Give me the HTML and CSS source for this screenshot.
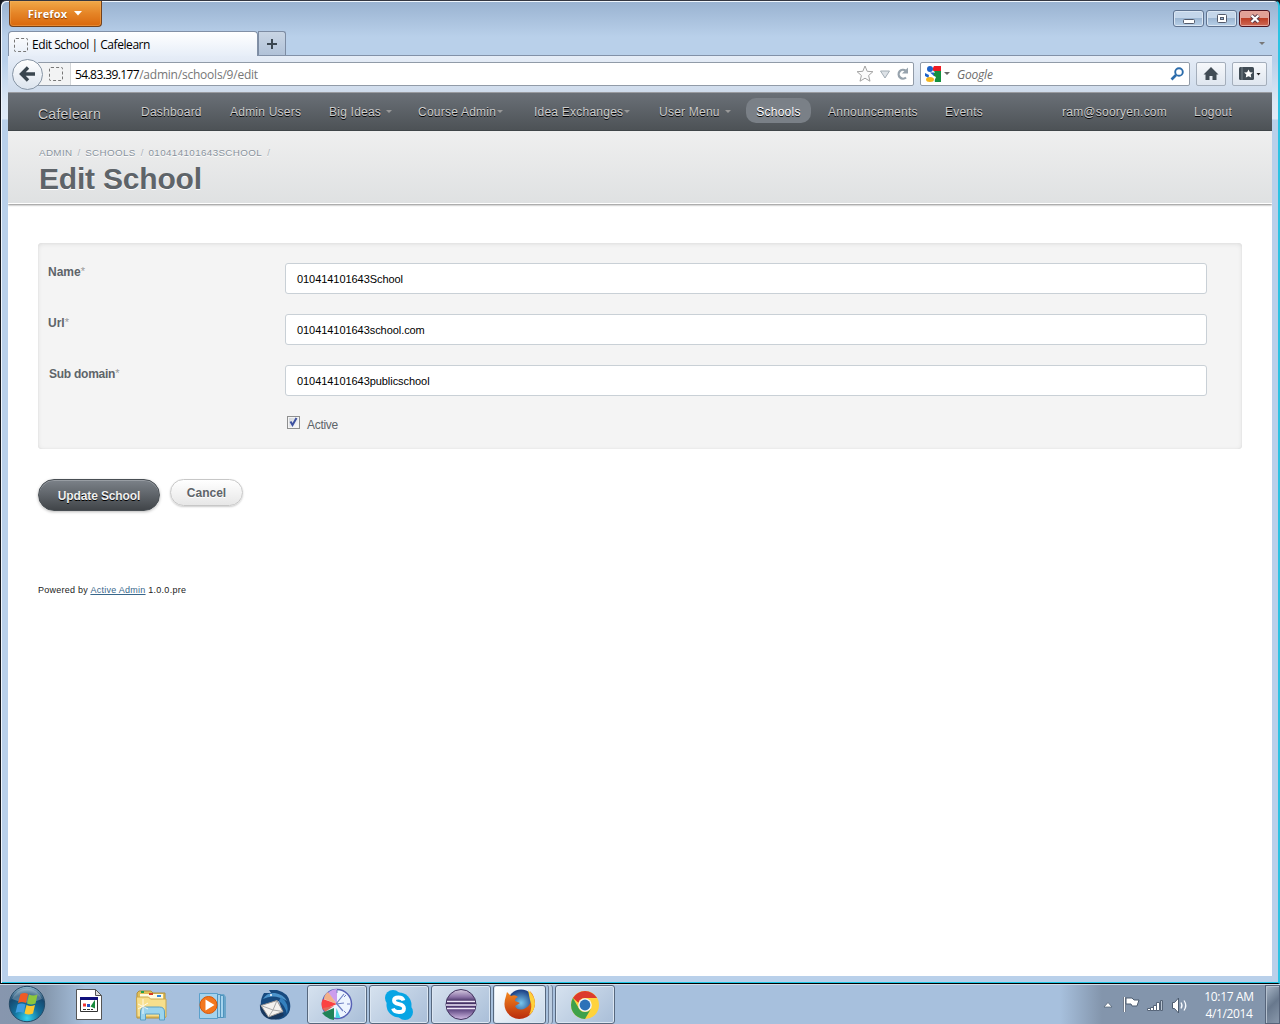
FILE: index.html
```html
<!DOCTYPE html>
<html lang="en">
<head>
<meta charset="utf-8">
<title>Edit School | Cafelearn</title>
<link rel="stylesheet" href="styles.css">
</head>
<body>
<div class="window">
  <div class="titlebar">
    <div class="firefox-button"><span>Firefox</span><svg width="8" height="5"><path d="M0 0h8l-4 4.6z" fill="#fff"/></svg></div>
    <div class="window-controls">
      <div class="control"><svg width="12" height="12"><rect x=".5" y="6.500" width="11" height="4" rx="1" fill="#fff" stroke="#535a6b"/></svg></div>
      <div class="control"><svg width="12" height="12"><rect x="1.500" y="1.500" width="9" height="8" rx="1" fill="#fff" stroke="#535a6b"/><rect x="4.500" y="4.500" width="3" height="2" fill="#9ab8d8" stroke="#535a6b"/></svg></div>
      <div class="control close"><svg width="12" height="12"><path d="M2.500 2.500l7 6.500m0-6.500l-7 6.500" stroke="#5b3a48" stroke-width="4.200"/><path d="M2.500 2.500l7 6.500m0-6.500l-7 6.500" stroke="#fff" stroke-width="2.300"/></svg></div>
    </div>
  </div>
  <div class="tabs">
    <div class="tab"><span class="blank-icon"></span><span>Edit School | Cafelearn</span></div>
    <div class="new-tab"><svg width="12" height="12"><path d="M1 6h10M6 1v10" stroke="#3b4650" stroke-width="2"/></svg></div>
    <svg class="tab-list" width="6" height="4"><path d="M0 0h6l-3 3z" fill="#777"/></svg>
  </div>
  <div class="toolbar">
    <div class="back"><svg width="18" height="16"><path d="M9 1.500L2.500 8 9 14.500M3 8h13" fill="none" stroke="#3a464f" stroke-width="3.400"/></svg></div>
    <div class="address">
      <div class="identity"><span class="blank-icon"></span></div>
      <div class="url"><b>54.83.39.177</b>/admin/schools/9/edit</div>
      <svg class="address-icons" width="56" height="20">
        <path d="M9 2l2.200 5.300 5.700.4-4.300 3.800 1.400 5.700-5-3-5 3 1.400-5.700-4.300-3.800 5.700-.4z" fill="#fbfbfb" stroke="#a3a3a3"/>
        <path d="M24.500 7h9L29 14z" fill="#dde2e7" stroke="#a3adb5"/>
        <path d="M50 13.500a4.400 4.400 0 1 1-.3-6.800" fill="none" stroke="#97a3ad" stroke-width="2.300"/><path d="M52 3.500v6h-6z" fill="#97a3ad"/>
      </svg>
    </div>
    <div class="search">
      <svg width="17" height="17"><path d="M8 0h8v5H8z" fill="#ee1b23"/><path d="M8 5h8v11H8z" fill="#14903f"/><path d="M9 0q-3 4 1 6-4 3 1 5-2 3-1 6H0V0z" fill="#fff"/><circle cx="5" cy="3" r="3" fill="#1d62c8"/><path d="M0 7l4 2-.5 3L0 10z" fill="#1d62c8"/><path d="M5 6.500h4v3.500z" fill="#1d62c8"/><ellipse cx="5" cy="13.500" rx="4" ry="2.500" fill="#f5b51b"/></svg>
      <svg class="engine-arrow" width="6" height="4"><path d="M0 0h6l-3 3z" fill="#666"/></svg>
      <span>Google</span>
      <svg class="magnifier" width="15" height="15"><circle cx="9" cy="5" r="3.800" fill="none" stroke="#2c6cab" stroke-width="1.900"/><path d="M6 8l-4.500 4.500" stroke="#2c6cab" stroke-width="2.600"/></svg>
    </div>
    <div class="tool home"><svg width="16" height="16"><path d="M8 1l7.500 7.500h-2V14h-4v-4h-3v4h-4V8.500h-2z" fill="#414c55"/></svg></div>
    <div class="tool bookmarks"><svg width="23" height="16"><rect x="1" y="1" width="15" height="13" rx="1.500" fill="#414c55"/><path d="M4 1v13" stroke="#7b858d"/><path d="M10.500 3.500l1.400 2.700 3 .4-2.200 2 .5 3-2.700-1.400-2.700 1.400.5-3-2.200-2 3-.4z" fill="#fff"/><path d="M18.500 7h4l-2 2.500z" fill="#222"/></svg></div>
  </div>

  <div class="page">
    <div class="nav">
      <span class="site-title">Cafelearn</span>
      <span>Dashboard</span>
      <span>Admin Users</span>
      <span class="has-menu ideas">Big Ideas</span>
      <span class="has-menu">Course Admin</span>
      <span class="has-menu">Idea Exchanges</span>
      <span class="has-menu user">User Menu</span>
      <span class="current">Schools</span>
      <span>Announcements</span>
      <span>Events</span>
      <span>ram@sooryen.com</span>
      <span>Logout</span>
    </div>
    <div class="header">
      <div class="breadcrumb"><span>ADMIN</span><i>/</i><span>SCHOOLS</span><i>/</i><span>010414101643SCHOOL</span><i>/</i></div>
      <h1>Edit School</h1>
    </div>
    <div class="content">
      <div class="fieldset">
        <div class="row"><label>Name<sup>*</sup></label><div class="input">010414101643School</div></div>
        <div class="row"><label>Url<sup>*</sup></label><div class="input">010414101643school.com</div></div>
        <div class="row"><label class="sub">Sub domain<sup>*</sup></label><div class="input">010414101643publicschool</div></div>
        <div class="check-row"><span class="checkbox"><svg width="11" height="11"><path d="M2.500 4.500l2 3.500 4-7" fill="none" stroke="#3c50a0" stroke-width="2"/></svg></span><span>Active</span></div>
      </div>
      <div class="actions"><div class="submit">Update School</div><div class="cancel">Cancel</div></div>
      <div class="footer">Powered by <a>Active Admin</a> 1.0.0.pre</div>
    </div>
  </div>
</div>

<div class="taskbar">
  <svg class="start" width="38" height="38" viewBox="0 0 38 38">
    <defs><radialGradient id="orb" cx=".5" cy=".9" r=".9"><stop offset="0" stop-color="#35d5ef"/><stop offset=".4" stop-color="#14719c"/><stop offset=".75" stop-color="#16486f"/><stop offset="1" stop-color="#9cc0d4"/></radialGradient></defs>
    <circle cx="19" cy="19" r="17.700" fill="url(#orb)" stroke="#244a67"/>
    <path d="M4 14a16 16 0 0 1 30 0q-15 7-30 0z" fill="#fff" opacity=".25"/>
    <path d="M12.500 9q4-2 7.500 0l-2 9q-4-2-8 0z" fill="#ef5a25"/><path d="M21 9.500q4 2 8.500 0l-2 9q-4.500 2-8.500 0z" fill="#8cc63e"/><path d="M9.500 19.500q4-2 8 0l-2 8.500q-4-2-8 0z" fill="#3e9ce0"/><path d="M18.500 20q4 2 8.500 0l-2 8.500q-4.500 2-8.500 0z" fill="#fdc72f"/>
  </svg>
  <svg class="quick" width="36" height="36" viewBox="0 0 36 36">
    <path d="M5.500 2.500h19l6 6v24h-25z" fill="#fff" stroke="#555"/><path d="M24.500 2.500v6h6z" fill="#ddd" stroke="#555"/><path d="M9.500 10.500h17v14h-17z" fill="#fff" stroke="#333"/><path d="M9 10h18v3H9z" fill="#10107c"/><path d="M12 16.500h3v3h-3z" fill="#e33"/><path d="M16 17h3v3h-3z" fill="#2350c0"/><path d="M21 19l2-3v4z" stroke="#188c3c" stroke-width="2"/><path d="M12 22.500h10" stroke="#333" stroke-dasharray="3 1"/>
  </svg>
  <svg class="quick" width="36" height="36" viewBox="0 0 36 36">
    <path d="M4 6l2-2h12l2 2h12v25H4z" fill="#e1bf59" stroke="#b1903d"/><path d="M7 7h23v5H7z" fill="#fffbe0"/><path d="M8 5h3" stroke="#20a04c" stroke-width="2"/><path d="M16 7h4" stroke="#d53a24" stroke-width="2"/><path d="M24 9h4" stroke="#3185db" stroke-width="2"/><path d="M3.500 10h12l2 2h15.500v18H4z" fill="#f7df8c" stroke="#caa64c"/><path d="M7.500 33v-8q0-5 5-5h14q5 0 5 5v8h-5v-6h-14v6z" fill="#9bd4ed" stroke="#5b9fc3"/><path d="M10 12v15M5 22l10-6M5 17l10 5" stroke="#fff" opacity=".8"/>
  </svg>
  <svg class="quick" width="36" height="36" viewBox="0 0 36 36">
    <path d="M4 7h25l2 3v21H9z" fill="#6ba6ca"/><path d="M4.500 6.500h18v25h-18z" fill="#a5d3ed" stroke="#5aa0cb"/><path d="M22.500 7.500h3v23h-3zM25.500 8.500h3v22h-3z" fill="#a5d3ed" stroke="#4f93bd"/><circle cx="13.500" cy="18" r="8.500" fill="#f3771e" stroke="#d85706"/><path d="M10.500 12.500l9 5.500-9 5.500z" fill="#fff"/>
  </svg>
  <svg class="quick" width="36" height="36" viewBox="0 0 36 36">
    <path d="M7 6l7 0-2-3 8 0q12 3 13 13 2 12-9 16-4 1-7 0 7-1 9-6L22 14 4 20Q3 12 7 6z" fill="#174a7f"/>
    <path d="M6 12q4-7 12-6 8 1 12 8-13-8-24-2z" fill="#4c94cb"/><path d="M24 10q9 7 6 17-2-9-8-13z" fill="#3480bd"/>
    <path d="M3 17q-1 11 9 15 9 2 15-4l-3-6-12 8z" fill="#18385f"/>
    <path d="M4 18.500l16-5 6 11-14.500 5.500z" fill="#f4f2ef" stroke="#9c9793"/><path d="M4 18.500l12 4.500 4-9.500M11.500 30l4.500-7 10 1.500" fill="none" stroke="#aaa"/><circle cx="14" cy="8" r="1" fill="#fff"/>
  </svg>
  <div class="task"><svg width="36" height="36" viewBox="0 0 36 36"><circle cx="18" cy="17" r="14.500" fill="#eef5ff" stroke="#5862b5" stroke-width="1.500"/><path d="M18 17L9 6q4-4 9-4z" fill="#cc9ced"/><path d="M18 17L5 12q0-4 4-7z" fill="#f3b088"/><path d="M18 17L4 23q-3-6 0-11z" fill="#fb4243"/><path d="M15 19L6 25l-2-4z" fill="#e2685b"/><path d="M15 21v12q-7-1-12-7z" fill="#218357"/><path d="M17.500 21l4 10h-5z" fill="#4dd5e2"/><path d="M17 17L25 7M17 17l8-1M18 17l6 7" stroke="#7080c4" stroke-width="1.200"/><path d="M18 3v3M31 17h-3M27 8l-2 2M27 26l-2-2" stroke="#7380c2"/></svg></div>
  <div class="task"><svg width="36" height="36" viewBox="0 0 36 36"><circle cx="18" cy="18" r="12.500" fill="#08a5e4"/><circle cx="12" cy="11" r="8" fill="#08a5e4"/><circle cx="24" cy="25" r="8" fill="#08a5e4"/><path d="M22.500 13.500q-1-3-5-3-4.500 0-4.500 3 0 2.700 5 3.700t5 4.200q0 3.600-5 3.600t-6-3.500" fill="none" stroke="#fff" stroke-width="3.800"/></svg></div>
  <div class="task"><svg width="36" height="36" viewBox="0 0 36 36"><defs><linearGradient id="sphere" x2="0" y2="1"><stop stop-color="#d8cde2"/><stop offset=".25" stop-color="#8a72a6"/><stop offset=".4" stop-color="#3d2b5d"/><stop offset=".65" stop-color="#58407c"/><stop offset="1" stop-color="#d3bde6"/></linearGradient></defs><circle cx="18" cy="17.500" r="15" fill="url(#sphere)" stroke="#40315c"/><path d="M4 14.500h28M3 18h30M4 21.500h28" stroke="#eee8f8" stroke-width="1.600"/></svg></div>
  <div class="task-group"><div class="task active"><svg width="36" height="36" viewBox="0 0 36 36"><defs><radialGradient id="globe"><stop stop-color="#79c7ed"/><stop offset="1" stop-color="#183a80"/></radialGradient><linearGradient id="fox" x2="0" y2="1"><stop stop-color="#f58a1f"/><stop offset="1" stop-color="#b92b0d"/></linearGradient></defs><circle cx="19" cy="16" r="13.500" fill="url(#globe)"/><path d="M4 9l1-4 4 4q4-2 7 1-3 1-3 4l5 2-5 3q2 5 9 3 7-3 7-10l-1-8q5 5 5 13-1 9-8 13-8 4-15 0Q-1 23 4 9z" fill="url(#fox)"/><path d="M26 3q7 6 7 14-1 8-6 11 4-8 1-15z" fill="#ffd13b"/></svg></div></div>
  <div class="task"><svg width="36" height="36" viewBox="0 0 36 36"><circle cx="18" cy="18" r="14" fill="#ffd33c"/><path d="M5.900 11A14 14 0 0 1 30.100 11H18a7 7 0 0 0-6.600 4.700z" fill="#dc3a2c"/><path d="M5.900 11A14 14 0 0 0 18 32l6.100-10.500A7 7 0 0 1 11.900 21.500z" fill="#3fa14a"/><circle cx="18" cy="18" r="6.800" fill="#f4f6f8"/><circle cx="18" cy="18" r="5.400" fill="#2c71b8"/></svg></div>
  <div class="tray">
    <svg class="tray-icons" width="90" height="24">
      <path d="M2 14l4-4.500 4 4.500z" fill="#fff" stroke="#4b5b6f" stroke-width=".7"/>
      <path d="M22.500 4v15" stroke="#435267" stroke-width="3"/><path d="M22.500 4v15" stroke="#fff" stroke-width="1.500"/><path d="M24 5h6l2 2h5l-2 6h-5l-1-2h-5z" fill="#fff" stroke="#4b5b6f"/>
      <path d="M45.500 15.500h3v2h-3zM48.500 14.500h3v3h-3zM51.500 12.500h3v5h-3zM54.500 9.500h3v8h-3z" fill="#fff" stroke="#566579"/><path d="M58.500 7.500h2v10h-2z" fill="#b8c4d2" stroke="#566579"/>
      <path d="M70.500 9.500h2l4-4.500v15l-4-4.500h-2z" fill="#fff" stroke="#4b5b6f"/><path d="M79 9.500q2 3 0 6M82 7.500q3.500 5 0 10" fill="none" stroke="#f8fbff" stroke-width="1.300"/>
    </svg>
    <div class="clock"><span>10:17 AM</span><span>4/1/2014</span></div>
    <div class="show-desktop"></div>
  </div>
</div>
</body>
</html>
```

FILE: styles.css
```css
* { box-sizing: border-box; }
body {
  margin: 0;
  width: 1280px;
  height: 1024px;
  overflow: hidden;
  background: #15181f;
  font-family: "Liberation Sans", Arial, sans-serif;
}
svg { display: block; flex: none; }
.window {
  height: 984px;
  padding: 0 6px 6px 7px;
  border: 1px solid #15181f;
  border-top-color: #343741;
  border-right: 2px solid #2cc3e3;
  border-bottom-color: #000;
  border-radius: 6px 6px 0 0;
  box-shadow: inset 1px 1px #f0f6fd, inset 0 -1px #1bc6e6;
  background: linear-gradient(#99b2d0, #b9d0ea 36px, #b9d0ea 60px, #dbe7f4 100px, #dfeaf7 118px, #b9d0ea 119px, #b9d0ea);
}
.titlebar { height: 30px; display: flex; justify-content: space-between; }
.firefox-button {
  width: 93px;
  height: 26px;
  margin-left: 1px;
  display: flex;
  align-items: center;
  justify-content: center;
  gap: 7px;
  padding-right: 1px;
  border: 1px solid #72411c;
  border-top: 0;
  border-radius: 0 0 4px 4px;
  background: linear-gradient(#f0a848, #e58426 50%, #d9680d);
  box-shadow: inset 0 0 0 1px #f6b66a66;
  color: #fff;
  font: bold 11px "Open Sans", sans-serif;
  letter-spacing: .2px;
  text-shadow: 0 1px 1px #8a3b00;
}
.window-controls { display: flex; gap: 2px; padding: 9px 2px 0 0; }
.control {
  width: 31px;
  height: 17px;
  display: flex;
  align-items: center;
  justify-content: center;
  border: 1px solid #5f7390;
  border-radius: 3px;
  background: linear-gradient(#c4d6ea 45%, #9db7d3 50%, #b8d0e8);
  box-shadow: inset 0 0 0 1px #dae6f3;
}
.close { border-color: #4e1420; background: linear-gradient(#e1a197 45%, #bd3f27 50%, #ce6955); box-shadow: inset 0 0 0 1px #e7a79d; }
.tabs { height: 25px; display: flex; align-items: flex-end; border-bottom: 1px solid #8291a8; font: 12px "Open Sans", sans-serif; }
.tab {
  width: 250px;
  height: 25px;
  margin-bottom: -1px;
  display: flex;
  align-items: center;
  gap: 4px;
  padding: 1px 0 0 5px;
  border: 1px solid #8190a6;
  border-bottom: 0;
  border-radius: 4px 4px 0 0;
  background: linear-gradient(#fff, #e7eef8);
  letter-spacing: -.44px;
  color: #000;
  white-space: nowrap;
}
.blank-icon { width: 14px; height: 14px; border: 1px dashed #777; border-radius: 2px; }
.new-tab { width: 28px; height: 24px; display: grid; place-items: center; border: 1px solid #7d8ca3; border-bottom: 0; border-radius: 0 3px 0 0; background: linear-gradient(#c9d5e4, #b1c2d8); }
.tab-list { margin: 0 7px 9px auto; }
.toolbar {
  height: 36px;
  display: flex;
  align-items: center;
  padding: 0 4px;
  background: linear-gradient(#e6edf7, #cfdcec);
  font: 12px "Open Sans", sans-serif;
}
.back { width: 31px; height: 31px; z-index: 1; display: grid; place-items: center; border: 1px solid #8795a5; border-radius: 50%; background: linear-gradient(#fff, #dce4ee); }
.address { width: 877px; height: 24px; margin-left: -6px; display: flex; align-items: center; border: 1px solid #919ba8; border-radius: 2px; background: #fff; }
.identity { width: 33px; height: 22px; display: grid; place-items: center end; padding-right: 7px; border-right: 1px solid #d2d5d8; background: #f2f3f4; }
.url { padding-left: 4px; color: #777; letter-spacing: -.22px; }
.url b { font-weight: 400; color: #000; letter-spacing: -.59px; }
.address-icons { margin: 0 1px 0 auto; }
.address-icons + * { margin: 0; }
.search { width: 270px; height: 24px; margin-left: 6px; display: flex; align-items: center; padding: 0 4px; border: 1px solid #919ba8; border-radius: 2px; background: #fff; color: #6c6c6c; font-style: italic; }
.search span { letter-spacing: -.2px; }
.engine-arrow { margin: 0 7px 0 2px; }
.magnifier { margin-left: auto; }
.tool { height: 24px; display: grid; place-items: center; border: 1px solid #a4aebb; border-radius: 2px; background: linear-gradient(#f6f8fb, #dfe6ef); }
.home { width: 30px; margin-left: 6px; }
.bookmarks { width: 35px; margin-left: 6px; }
.page { height: 884px; background: #fff; border-top: 1px solid #999ba0; }
.nav {
  height: 38px;
  display: grid;
  grid-template-columns: 103px 89px 99px 89px 116px 125px 87px 82px 117px 117px 132px 1fr;
  padding-left: 30px;
  border-bottom: 1px solid #404548;
  background: linear-gradient(#6a7077, #4d5256);
  color: #cdcdcd;
  font-size: 12px;
  letter-spacing: .23px;
  line-height: 38px;
  text-shadow: #000 0 1px 0;
  white-space: nowrap;
}
.nav .site-title { font-size: 14px; line-height: 42px; letter-spacing: .25px; }
.has-menu::after { content: ""; display: inline-block; margin: 0 0 3px 1px; border: 3px solid transparent; border-top-color: #999; border-bottom: 0; }
.ideas::after, .user::after { margin-left: 5px; }
.nav .current { width: 65px; height: 25px; margin-top: 5px; text-align: center; line-height: 28px; border-radius: 10px; background: #7a8087; color: #fff; }
.header { height: 73px; padding: 16px 31px 0; border-bottom: 1px solid #fff; background: linear-gradient(#efefef, #dfe1e2); box-shadow: 0 1px 2px #888; clip-path: inset(0 0 -4px); }
.breadcrumb { display: flex; gap: 5px; height: 12px; color: #8a949e; font-size: 9.8px; line-height: 12px; letter-spacing: .38px; text-shadow: 0 1px #fff; }
.breadcrumb i { font-style: normal; color: #aab2b8; letter-spacing: 0; }
h1 { margin: 2px 0 0; color: #5e6469; font-size: 30px; line-height: 35px; letter-spacing: -.2px; text-shadow: 0 1px #fff; }
.content { padding: 39px 30px 0; color: #5e6469; }
.fieldset { height: 206px; padding: 20px 35px 0 10px; border-radius: 4px; background: #f4f4f4; box-shadow: inset 0 1px 4px #ddd, inset 0 0 1px #ccc; }
.row { height: 51px; display: flex; justify-content: space-between; }
label { padding-top: 1px; font-size: 12px; font-weight: 700; line-height: 16px; letter-spacing: 0; }
label.sub { padding-left: 1px; letter-spacing: -.25px; }
sup { font-size: 11px; font-weight: 400; line-height: 0; vertical-align: 1px; color: #999; }
.input { width: 922px; height: 31px; padding-left: 11px; border: 1px solid #c9d0d6; border-radius: 3px; background: #fff; color: #000; font-size: 11px; line-height: 31px; letter-spacing: -.06px; }
.check-row { display: flex; gap: 7px; padding-left: 239px; font-size: 12px; line-height: 18px; letter-spacing: -.3px; }
.checkbox { width: 13px; height: 13px; border: 1px solid #8e8f8f; background: linear-gradient(135deg, #ccd1d8, #fff); box-shadow: inset 0 0 0 1px #f4f4f4; }
.actions { height: 102px; padding-top: 30px; display: flex; gap: 10px; font-size: 12px; font-weight: 700; text-align: center; }
.submit { width: 122px; height: 32px; border: 1px solid #484e53; border-radius: 16px; background: linear-gradient(#7c8289, #414549); box-shadow: 0 1px 3px #bbb, inset 0 1px #989da3; color: #f0f0f0; line-height: 32px; letter-spacing: -.12px; text-shadow: 0 1px #000; }
.cancel { width: 73px; height: 27px; border: 1px solid #c7c7c7; border-radius: 14px; background: linear-gradient(#fff, #e7e7e7); box-shadow: 0 1px 2px #ccc; line-height: 26px; text-shadow: 0 1px #fff; }
.footer { padding-top: 33px; color: #222; font-size: 9px; line-height: 13px; letter-spacing: .26px; }
.footer a { color: #38678b; text-decoration: underline; }
.taskbar {
  height: 40px;
  display: flex;
  padding-left: 8px;
  border-top: 1px solid #d0dceb;
  background: linear-gradient(90deg, #8796ae, #8497ad 45px, #a7c0dd 85px, #a7c0dd 1060px, #8395ac 1102px, #8395ac);
}
.start { margin-right: 25px; }
.quick { margin: 2px 26px 0 0; }
.quick + .task { margin-left: -12px; }
.task { width: 60px; height: 39px; margin-right: 2px; display: grid; place-items: center; border: 1px solid #57687e; border-radius: 3px; background: linear-gradient(135deg, #d6e2ef, #a9bed8); box-shadow: inset 0 0 0 1px #dbe6f2; }
.task-group { width: 60px; margin-right: 2px; border-right: 1px solid #6e809a; box-shadow: inset -3px 0 #bccde0, inset -4px 0 #6e809a; border-radius: 3px; }
.active { width: 53px; margin: 0; background: linear-gradient(135deg, #fff, #c7d8ea); }
.tray { margin-left: auto; display: flex; align-items: center; color: #fff; font: 12px "Open Sans", sans-serif; }
.tray-icons { margin-right: 12px; }
.clock { width: 50px; display: flex; flex-direction: column; align-items: center; line-height: 17px; letter-spacing: -.35px; white-space: nowrap; margin-right: 11px; }
.show-desktop { width: 15px; height: 39px; border: 1px solid #56647a; background: linear-gradient(135deg, #a8b6c6, #68788d 50%, #8998ab); box-shadow: inset 1px 1px #b4c0ce; }
```
